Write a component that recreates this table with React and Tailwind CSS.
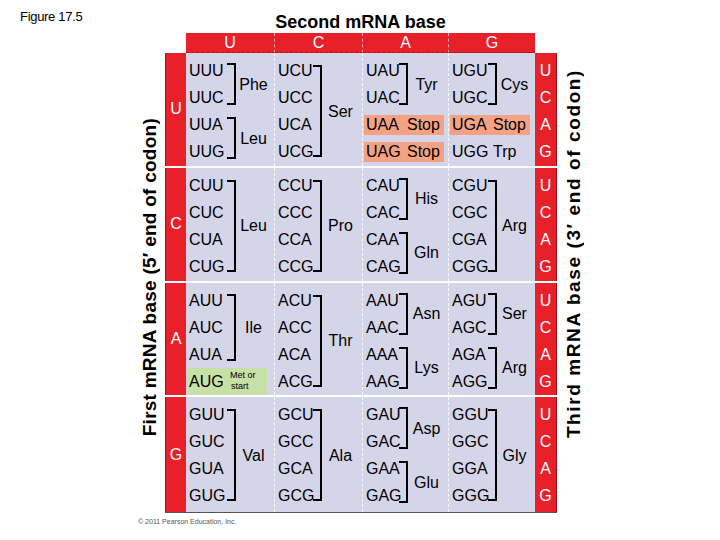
import React from "react";

const codonW = ["w-[38px]", "w-[35px]", "w-[33px]", "w-[36px]"];
const colW = ["w-[89px]", "w-[88px]", "w-[86px]", "w-[86px]"];
const bracketY = { 2: "my-[6px]", 3: "my-[7px]", 4: "my-[8px]" };

const g = (c, aa) => ({ c, aa });
const one = (codon, aa, tone) => ({ one: codon, aa, tone });

const rows = [
  {
    base: "U",
    cells: [
      [g(["UUU", "UUC"], "Phe"), g(["UUA", "UUG"], "Leu")],
      [g(["UCU", "UCC", "UCA", "UCG"], "Ser")],
      [g(["UAU", "UAC"], "Tyr"), one("UAA", "Stop", "stop"), one("UAG", "Stop", "stop")],
      [g(["UGU", "UGC"], "Cys"), one("UGA", "Stop", "stop"), one("UGG", "Trp")],
    ],
  },
  {
    base: "C",
    cells: [
      [g(["CUU", "CUC", "CUA", "CUG"], "Leu")],
      [g(["CCU", "CCC", "CCA", "CCG"], "Pro")],
      [g(["CAU", "CAC"], "His"), g(["CAA", "CAG"], "Gln")],
      [g(["CGU", "CGC", "CGA", "CGG"], "Arg")],
    ],
  },
  {
    base: "A",
    cells: [
      [g(["AUU", "AUC", "AUA"], "Ile"), { met: true }],
      [g(["ACU", "ACC", "ACA", "ACG"], "Thr")],
      [g(["AAU", "AAC"], "Asn"), g(["AAA", "AAG"], "Lys")],
      [g(["AGU", "AGC"], "Ser"), g(["AGA", "AGG"], "Arg")],
    ],
  },
  {
    base: "G",
    cells: [
      [g(["GUU", "GUC", "GUA", "GUG"], "Val")],
      [g(["GCU", "GCC", "GCA", "GCG"], "Ala")],
      [g(["GAU", "GAC"], "Asp"), g(["GAA", "GAG"], "Glu")],
      [g(["GGU", "GGC", "GGA", "GGG"], "Gly")],
    ],
  },
];

const Item = ({ it, col }) => {
  if (it.met) {
    return (
      <div className="h-[27px] -ml-[2px] w-[80px] pl-[2px] bg-[#c7e0a6] flex items-center">
        <span className="w-[41px]">AUG</span>
        <span className="text-[9px] leading-[11px]">
          Met or
          <br />
          <span className="pl-[1px]">start</span>
        </span>
      </div>
    );
  }
  if (it.one) {
    return (
      <div className="h-[27px] flex items-center">
        <div
          className={
            "h-[20px] -ml-[2px] w-[80px] pl-[2px] flex items-center " +
            (it.tone === "stop" ? "bg-[#f4a283]" : "")
          }
        >
          <span className="w-[41px]">{it.one}</span>
          <span>{it.aa}</span>
        </div>
      </div>
    );
  }
  return (
    <div className="flex">
      <div className={codonW[col]}>
        {it.c.map((c) => (
          <div key={c} className="h-[27px] leading-[27px]">
            {c}
          </div>
        ))}
      </div>
      <div className={"w-[9px] border-2 border-l-0 border-black " + bracketY[it.c.length]} />
      <div className="flex-1 flex items-center justify-center pr-[3px]">{it.aa}</div>
    </div>
  );
};

export default function App() {
  return (
    <div className="w-[720px] h-[540px] bg-white font-['Liberation_Sans',Arial,sans-serif] text-black overflow-hidden">
      <div className="h-[33px] flex">
        <div className="w-[186px] pl-[20px] pt-[10px] text-[13px] leading-[14px] font-['Liberation_Sans_Narrow','Liberation_Sans',sans-serif] tracking-[-0.3px]">
          Figure 17.5
        </div>
        <div className="w-[349px] text-center pt-[12px] text-[18px] leading-[20px] font-bold">
          Second mRNA base
        </div>
      </div>

      <div className="h-[20px] flex pl-[186px]">
        {["U", "C", "A", "G"].map((b, i) => (
          <div
            key={b}
            className={
              colW[i] +
              " bg-[#e8202a] text-white text-[16px] leading-[20px] text-center border-b border-[#b3161d] " +
              (i < 3 ? "border-r border-r-white/60 border-dashed" : "")
            }
          >
            {b}
          </div>
        ))}
      </div>

      <div className="flex h-[460px]">
        <div className="w-[165px] flex items-end justify-end pr-[4px] pb-[77px]">
          <div className="[writing-mode:vertical-rl] rotate-180 font-bold text-[19px] leading-[22px] whitespace-nowrap tracking-[0.25px]">
            First mRNA base (5′ end of codon)
          </div>
        </div>

        <div className="flex flex-col border-b border-[#555]">
          {rows.map((r, ri) => (
            <div
              key={r.base}
              className={
                "flex h-[115px] " +
                (ri < 3 ? "border-b-2 border-dashed border-white/80" : "")
              }
            >
              <div className="w-[21px] bg-[#e8202a] text-white text-[16px] flex items-center justify-center border-l border-[#9a1016]">
                {r.base}
              </div>
              {r.cells.map((items, ci) => (
                <div
                  key={ci}
                  className={
                    colW[ci] +
                    " bg-[#d5d5ea] pt-[4px] pl-[3px] text-[16px] leading-[27px] " +
                    (ci < 3 ? "border-r border-dashed border-white/80" : "")
                  }
                >
                  {items.map((it, k) => (
                    <Item key={k} it={it} col={ci} />
                  ))}
                </div>
              ))}
              <div className="w-[22px] bg-[#e8202a] text-white text-[16px] pt-[4px] border-r border-[#9a1016]">
                {["U", "C", "A", "G"].map((b) => (
                  <div key={b} className="h-[27px] leading-[27px] text-center">
                    {b}
                  </div>
                ))}
              </div>
            </div>
          ))}
        </div>

        <div className="flex-1 flex items-end pl-[6px] pb-[75px]">
          <div className="[writing-mode:vertical-rl] rotate-180 font-bold text-[19px] leading-[22px] whitespace-nowrap tracking-[1.6px]">
            Third mRNA base (3′ end of codon)
          </div>
        </div>
      </div>

      <div className="pl-[138px] pt-[4px] text-[7px] leading-[9px] text-[#555]">
        © 2011 Pearson Education, Inc.
      </div>
    </div>
  );
}
